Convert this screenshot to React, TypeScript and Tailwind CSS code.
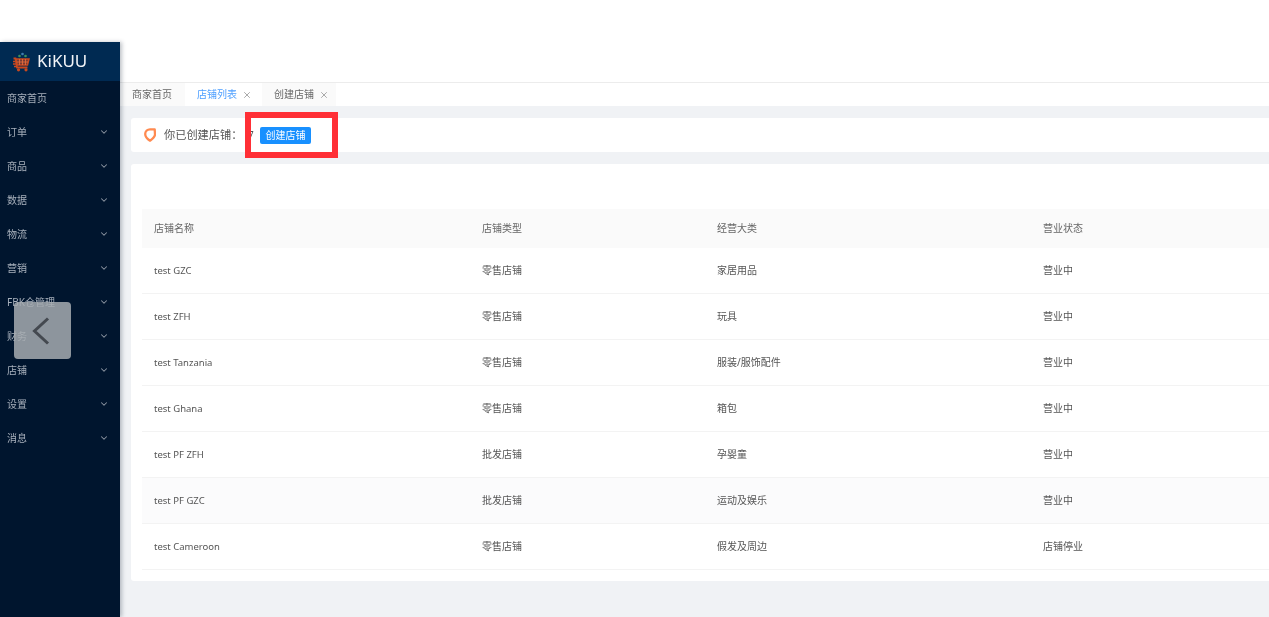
import { ChevronDown, X } from "lucide-react";

const menu = [
  { label: "商家首页", arrow: false },
  { label: "订单", arrow: true },
  { label: "商品", arrow: true },
  { label: "数据", arrow: true },
  { label: "物流", arrow: true },
  { label: "营销", arrow: true },
  { label: "FBK仓管理", arrow: true },
  { label: "财务", arrow: true },
  { label: "店铺", arrow: true },
  { label: "设置", arrow: true },
  { label: "消息", arrow: true },
];

const shops = [
  ["test GZC", "零售店铺", "家居用品", "营业中"],
  ["test ZFH", "零售店铺", "玩具", "营业中"],
  ["test Tanzania", "零售店铺", "服装/服饰配件", "营业中"],
  ["test Ghana", "零售店铺", "箱包", "营业中"],
  ["test PF ZFH", "批发店铺", "孕婴童", "营业中"],
  ["test PF GZC", "批发店铺", "运动及娱乐", "营业中"],
  ["test Cameroon", "零售店铺", "假发及周边", "店铺停业"],
];

function CartLogo() {
  return (
    <svg width="18" height="20" viewBox="0 0 18 20" fill="none" stroke="#c9481f" strokeWidth="1.5">
      <path d="M1.500 6.500H3.500L5 15.500H15.500" strokeWidth="1.800" />
      <path d="M4 7H17L15.500 13H5Z" fill="#c9481f" fillOpacity="0.6" />
      <path d="M7.500 7v6M10.500 7v6M13.500 7v6M4.500 10H16" strokeWidth="0.800" stroke="#e8703f" />
      <path d="M1 9.500h2.500M1 12h3M2 14.500h2.500" strokeWidth="1.300" />
      <circle cx="6.500" cy="17.800" r="1.600" fill="#c9481f" stroke="none" />
      <circle cx="14" cy="17.800" r="1.600" fill="#c9481f" stroke="none" />
      <circle cx="7.500" cy="4" r="1.300" fill="#3f8f5a" stroke="none" />
      <circle cx="10.500" cy="2" r="1.300" fill="#3f7fb0" stroke="none" />
      <circle cx="13.500" cy="4" r="1.300" fill="#3f8f5a" stroke="none" />
    </svg>
  );
}

function TagIcon() {
  return (
    <svg width="12" height="14" viewBox="0 0 12 14" fill="none">
      <path
        d="M6 1.300H10.700L11 6.500C11 8.800 8 11.300 6 12.700 3.800 11.300 1.200 8.600 1.200 6 1.200 3.300 3.500 1.300 6 1.300Z"
        stroke="#ff8a50"
        strokeWidth="2.300"
        strokeLinejoin="round"
      />
    </svg>
  );
}

export default function App() {
  return (
    <div
      className="relative flex h-[617px] w-[1269px] overflow-hidden bg-white pt-[42px] text-[10px] text-[#555] blur-[0.4px]"
      style={{ fontFamily: '"Noto Sans", "Noto Sans CJK SC", sans-serif' }}
    >
      {/* Sidebar */}
      <aside className="z-10 w-[120px] shrink-0 bg-[#00152e] shadow-[2px_0_4px_rgba(0,21,41,0.25)]">
        <div className="flex h-[39px] items-center gap-[7px] bg-[#002a52] pl-[12px]">
          <CartLogo />
          <span className="mb-[2px] text-[17px] leading-none text-[#f2f5f8]">KiKUU</span>
        </div>
        {menu.map((item) => (
          <div key={item.label} className="flex h-[34px] items-center justify-between pl-[7px] pr-[11px] text-[#a8b1bc]">
            <span>{item.label}</span>
            {item.arrow && <ChevronDown size={10} className="text-[#8d97a3]" strokeWidth={2.5} />}
          </div>
        ))}
      </aside>

      {/* Main */}
      <main className="flex min-w-0 flex-1 flex-col">
        <div className="h-10 bg-white" />
        <div className="flex h-[24px] gap-[1px] border-t border-[#ececec] bg-white pl-[2px]">
          <div className="flex w-[63px] items-center bg-[#fafafa] pl-[10px] text-[#666]">商家首页</div>
          <div className="flex w-[74px] items-center gap-[5px] bg-white pl-[11px] text-[#4d9fff]">
            店铺列表
            <X size={10} className="text-[#999]" />
          </div>
          <div className="ml-[1px] flex w-[74px] items-center gap-[5px] bg-[#fafafa] pl-[12px] text-[#666]">
            创建店铺
            <X size={10} className="text-[#999]" />
          </div>
        </div>

        <div className="flex flex-1 flex-col bg-[#f0f2f5] pl-[11px] pt-3">
          <div className="flex h-[34px] items-center rounded-l-[3px] bg-white pl-[13px]">
            <TagIcon />
            <span className="ml-[8px] w-[84px] text-[11.2px] text-[#555]">你已创建店铺：</span>
            <span className="w-[9px] text-[10px] text-[#555]">7</span>
            <button className="ml-[3px] flex h-[17px] w-[51px] items-center justify-center rounded-[2px] bg-[#1890ff] text-[10px] text-white">
              创建店铺
            </button>
          </div>

          <div className="mt-3 h-[417px] rounded-l-[3px] bg-white pl-[11px] pt-[45px]">
            <div className="flex h-[39px] items-center bg-[#fafafa] text-[#666]">
              <div className="w-[328px] pl-3">店铺名称</div>
              <div className="w-[235px] pl-3">店铺类型</div>
              <div className="w-[326px] pl-3">经营大类</div>
              <div className="pl-3">营业状态</div>
            </div>
            {shops.map((row, i) => (
              <div
                key={row[0]}
                className={`flex h-[46px] items-center border-b border-[#f3f3f3] ${i === 5 ? "bg-[#fbfbfc]" : ""}`}
              >
                <div className="w-[328px] pl-3 pt-[2px] text-[9.5px]">{row[0]}</div>
                <div className="w-[235px] pl-3">{row[1]}</div>
                <div className="w-[326px] pl-3">{row[2]}</div>
                <div className="pl-3">{row[3]}</div>
              </div>
            ))}
          </div>
        </div>
      </main>

      {/* Red annotation box */}
      <div className="absolute left-[245px] top-[112px] z-20 h-[46px] w-[93px] border-[6px] border-[#ff2f36]" />

      {/* Gallery back button */}
      <div className="absolute left-[14px] top-[302px] z-20 flex h-[57px] w-[57px] items-center justify-center rounded-[4px] bg-[#a6abb0]/85">
        <svg width="18" height="28" viewBox="0 0 18 28" fill="none" stroke="#444950" strokeWidth="3" className="mr-[3px]">
          <path d="M16 1.500 2.500 14 16 26.500" />
        </svg>
      </div>
    </div>
  );
}
